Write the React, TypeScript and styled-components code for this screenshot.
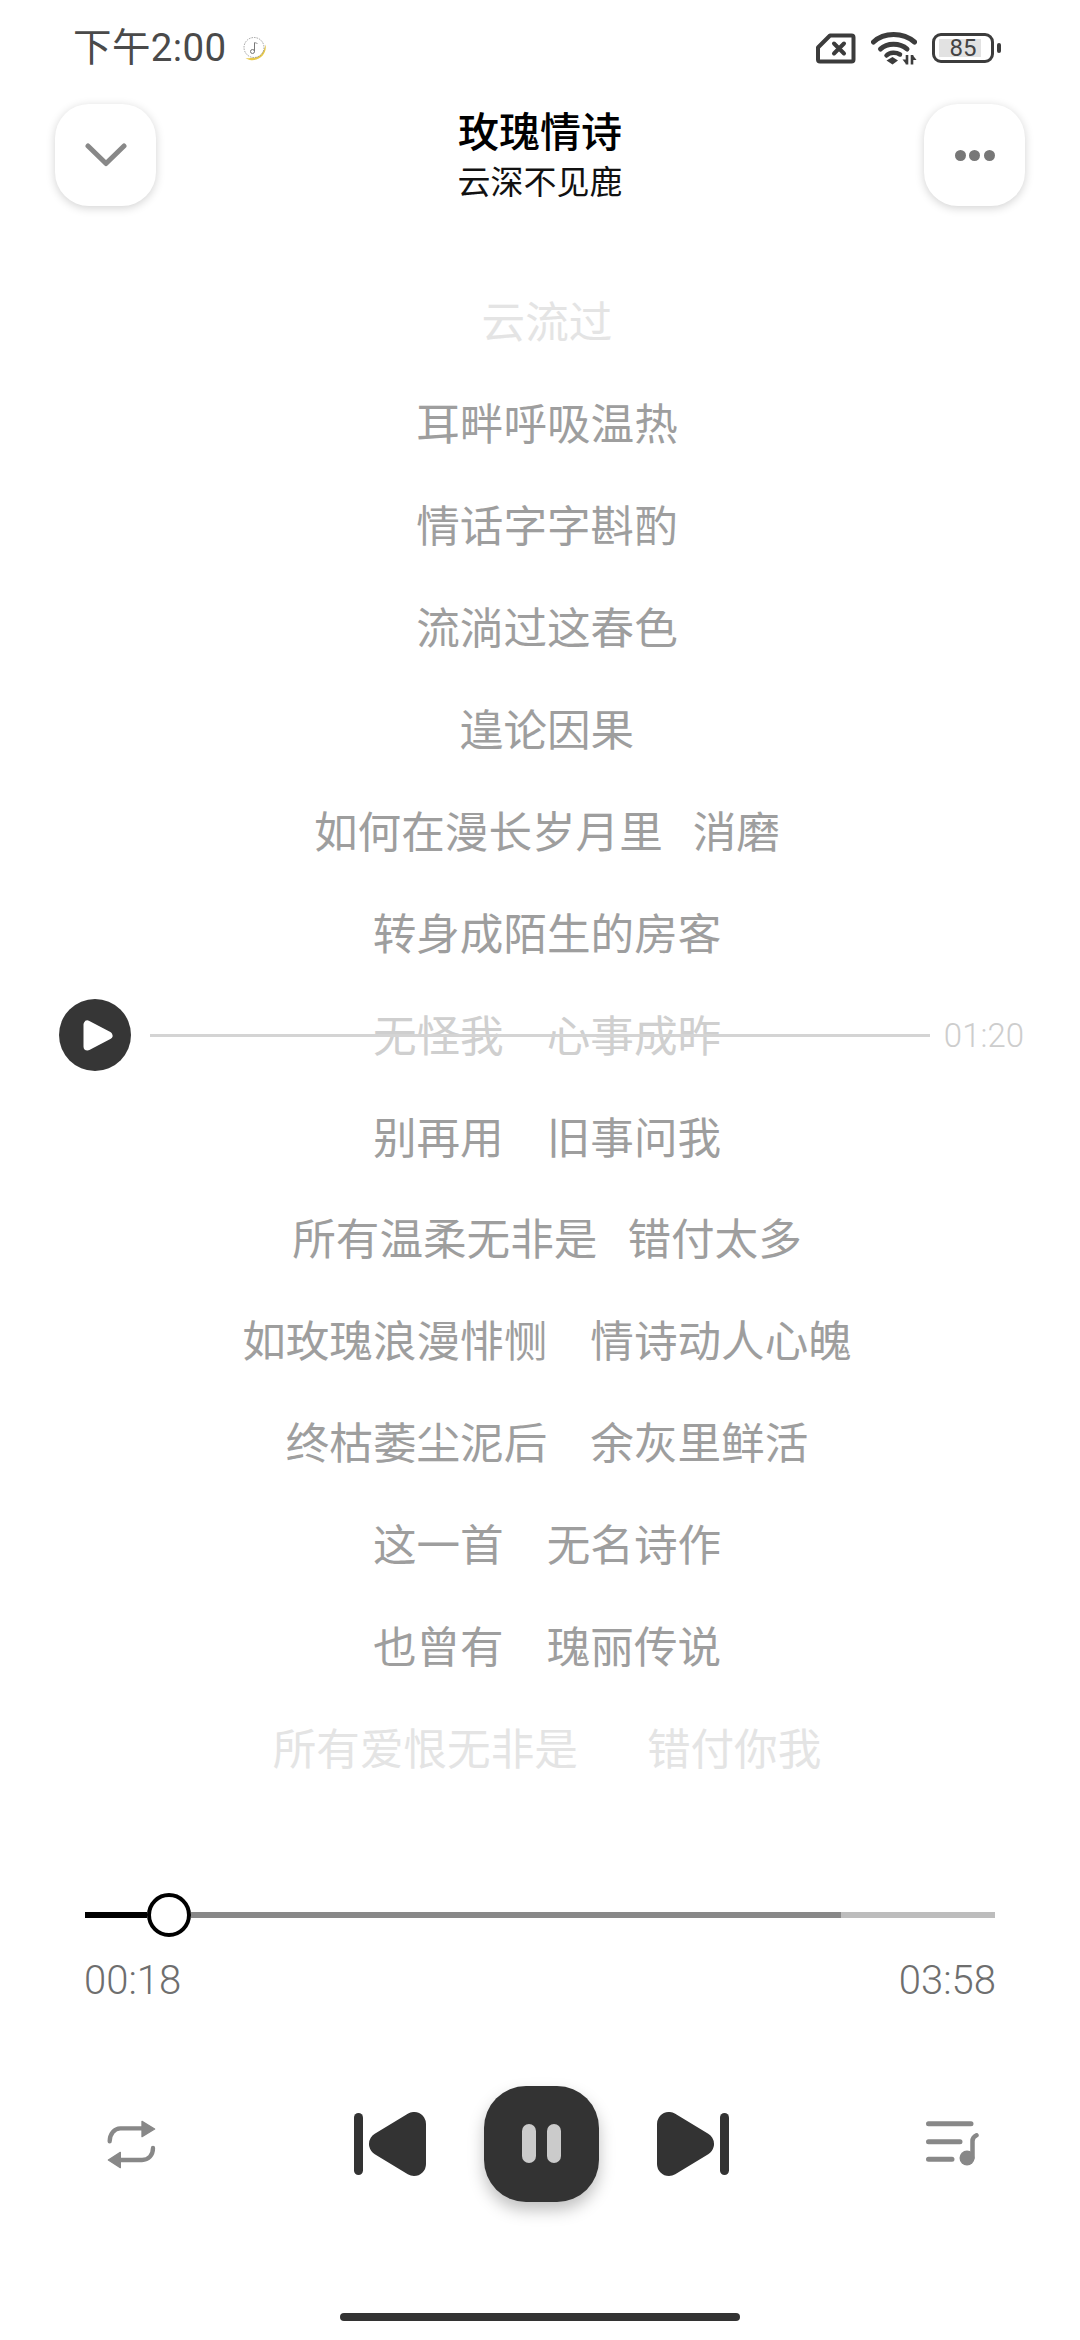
import * as React from 'react';
import styled, { createGlobalStyle } from 'styled-components';

const GlobalStyle = createGlobalStyle`
    html, body {
        margin: 0;
        padding: 0;
        background: #fff;
    }
    body {
        font-family: Roboto, "Noto Sans CJK SC", sans-serif;
    }
`;

const Page = styled.div`
    width: 1080px;
    height: 2340px;
    display: flex;
    flex-direction: column;
    background: #fff;
    overflow: hidden;
`;

const StatusBar = styled.div`
    height: 104px;
    padding: 0 86px 8px 73px;
    box-sizing: border-box;
    display: flex;
    align-items: center;
    justify-content: space-between;
`;

const StatusLeft = styled.div`
    display: flex;
    align-items: center;
    gap: 15px;
`;

const Clock = styled.span`
    font-family: Roboto, "Noto Sans CJK SC", sans-serif;
    font-size: 38.5px;
    line-height: 48px;
    letter-spacing: 0.4px;
    color: #4a4a4a;
`;

const StatusRight = styled.div`
    display: flex;
    align-items: center;
    gap: 15px;
`;

const Battery = styled.div`
    position: relative;
    width: 62px;
    height: 30px;
    box-sizing: border-box;
    border: 3px solid #3c3c3c;
    border-radius: 9px;
    display: flex;
    align-items: center;
    justify-content: center;
    font-size: 24px;
    color: #444;
    background: linear-gradient(to right, #e2e2e2 0, #e2e2e2 100%) no-repeat 4px center / 42px 18px;

    &::after {
        content: '';
        position: absolute;
        right: -10px;
        top: 7px;
        width: 4px;
        height: 10px;
        border-radius: 2px;
        background: #3c3c3c;
    }
`;

const Header = styled.div`
    height: 102px;
    padding: 0 55px;
    display: flex;
    align-items: center;
    justify-content: space-between;
`;

const SquareButton = styled.div`
    width: 101px;
    height: 102px;
    border-radius: 34px;
    background: #fff;
    box-shadow: 0 2px 10px rgba(0, 0, 0, 0.18);
    display: flex;
    align-items: center;
    justify-content: center;
`;

const Titles = styled.div`
    display: flex;
    flex-direction: column;
    align-items: center;
    padding-bottom: 4px;
`;

const SongTitle = styled.div`
    font-family: "Noto Sans CJK SC", sans-serif;
    font-size: 41px;
    line-height: 48px;
    font-weight: 500;
    color: #000;
`;

const Artist = styled.div`
    margin-top: 6px;
    font-family: "Noto Sans CJK SC", sans-serif;
    font-size: 33px;
    line-height: 42px;
    color: #111;
`;

const Dots = styled.div`
    display: flex;
    gap: 3.5px;
`;

const Dot = styled.span`
    width: 11px;
    height: 11px;
    border-radius: 50%;
    background: #777;
`;

const Lyrics = styled.div`
    position: relative;
    margin-top: 62.5px;
    display: grid;
    grid-auto-rows: 101.9px;
    padding-left: 14px;
`;

const toneColor = {
    normal: '#9e9e9e',
    active: '#cfcfcf',
    faded: '#e4e4e4',
};

const LyricRow = styled.div<{ $tone: keyof typeof toneColor; $gap: number }>`
    display: flex;
    align-items: center;
    justify-content: center;
    gap: ${(p) => p.$gap}px;
    font-family: "Noto Sans CJK SC", sans-serif;
    font-size: 43.6px;
    color: ${(p) => toneColor[p.$tone]};
`;

const ScrubRow = styled.div`
    position: absolute;
    left: 59px;
    right: 56px;
    top: 730.5px;
    height: 72px;
    display: flex;
    align-items: center;
`;

const ScrubPlay = styled.div`
    width: 72px;
    height: 72px;
    flex: none;
    border-radius: 50%;
    background: #363636;
    display: flex;
    align-items: center;
    justify-content: center;
`;

const ScrubLine = styled.div`
    flex: 1;
    height: 3px;
    margin: 0 14px 0 19px;
    background: #d4d4d4;
`;

const ScrubTime = styled.span`
    font-size: 33px;
    font-weight: 300;
    color: #cdcdcd;
`;

const Progress = styled.div`
    margin-top: 96px;
    padding: 0 85px;
`;

const Track = styled.div`
    height: 44px;
    display: flex;
    align-items: center;
`;

const TrackPart = styled.div<{ $color: string; $width?: number }>`
    height: 6px;
    background: ${(p) => p.$color};
    ${(p) => (p.$width ? `width: ${p.$width}px;` : 'flex: 1;')}
`;

const Thumb = styled.div`
    width: 44px;
    height: 44px;
    flex: none;
    box-sizing: border-box;
    border: 4px solid #000;
    border-radius: 50%;
    background: #fff;
`;

const Times = styled.div`
    margin: 21px -1px 0 -1px;
    display: flex;
    justify-content: space-between;
    font-size: 40px;
    line-height: 46px;
    font-weight: 300;
    color: #6e6e6e;
`;

const Controls = styled.div`
    margin-top: 82px;
    padding: 0 101px 0 107px;
    display: flex;
    align-items: center;
    justify-content: space-between;
`;

const Transport = styled.div`
    display: flex;
    align-items: center;
    gap: 58px;
`;

const PauseButton = styled.div`
    width: 115px;
    height: 116px;
    border-radius: 42px;
    background: #333;
    box-shadow: 0 8px 16px rgba(0, 0, 0, 0.25);
    display: flex;
    align-items: center;
    justify-content: center;
    gap: 11px;
`;

const PauseBar = styled.span`
    width: 14px;
    height: 39px;
    border-radius: 7px;
    background: #cbcbcb;
`;

const SkipIcon = styled.svg<{ $flip?: boolean }>`
    display: block;
    ${(p) => (p.$flip ? 'transform: scaleX(-1);' : '')}
`;

const HomeIndicator = styled.div`
    width: 400px;
    height: 8px;
    margin: auto auto 19px;
    border-radius: 4px;
    background: #333;
`;

const lyrics: { parts: string[]; tone?: keyof typeof toneColor; gap?: number }[] = [
    { parts: ['云流过'], tone: 'faded' },
    { parts: ['耳畔呼吸温热'] },
    { parts: ['情话字字斟酌'] },
    { parts: ['流淌过这春色'] },
    { parts: ['遑论因果'] },
    { parts: ['如何在漫长岁月里', '消磨'], gap: 30 },
    { parts: ['转身成陌生的房客'] },
    { parts: ['无怪我', '心事成昨'], tone: 'active', gap: 43 },
    { parts: ['别再用', '旧事问我'], gap: 43 },
    { parts: ['所有温柔无非是', '错付太多'], gap: 30 },
    { parts: ['如玫瑰浪漫悱恻', '情诗动人心魄'], gap: 43 },
    { parts: ['终枯萎尘泥后', '余灰里鲜活'], gap: 43 },
    { parts: ['这一首', '无名诗作'], gap: 43 },
    { parts: ['也曾有', '瑰丽传说'], gap: 43 },
    { parts: ['所有爱恨无非是', '错付你我'], tone: 'faded', gap: 69 },
];

const MusicMoon = () => (
    <svg width="25" height="25" viewBox="0 0 25 25">
        <path d="M23.5 8.5C25.5 17 18 25.5 8 24C5.5 23.5 4.5 22.8 3.5 22C12 23.5 22 19 23.5 8.5Z" fill="#e8c94a" />
        <circle cx="12" cy="11.5" r="10" fill="#fff" stroke="#8c8c8c" strokeWidth="0.8" strokeDasharray="1.6 1" />
        <path d="M12.5 15.5V6.5" fill="none" stroke="#777" strokeWidth="1" />
        <path d="M12.5 6.5L15.5 7.5" fill="none" stroke="#999" strokeWidth="1" />
        <circle cx="10.5" cy="15.5" r="2" fill="none" stroke="#777" strokeWidth="1" />
    </svg>
);

const SimOff = () => (
    <svg width="40" height="31" viewBox="0 0 40 31">
        <path
            d="M14 2.5H35.5a2 2 0 0 1 2 2V26.5a2 2 0 0 1-2 2H4a2 2 0 0 1-2-2V14.5Z"
            fill="none"
            stroke="#3c3c3c"
            strokeWidth="4"
            strokeLinejoin="round"
        />
        <path d="M18 10.5L28 20.5M28 10.5L18 20.5" stroke="#3c3c3c" strokeWidth="4" strokeLinecap="round" />
    </svg>
);

const Wifi = () => (
    <svg width="46" height="34" viewBox="0 0 46 34">
        <path d="M2.5 11C13 1 32 1 43.5 11" fill="none" stroke="#3c3c3c" strokeWidth="5" strokeLinecap="round" />
        <path d="M9.5 18C16 11.5 29 11.5 36 18" fill="none" stroke="#3c3c3c" strokeWidth="5" strokeLinecap="round" />
        <path d="M15.5 24.5C19 21 25 21 29 23.5" fill="none" stroke="#3c3c3c" strokeWidth="4.5" strokeLinecap="round" />
        <path d="M15.5 29.5L21.5 26L27 29.5L21.5 33.5Z" fill="#3c3c3c" />
        <path d="M36 24V33.5" stroke="#3c3c3c" strokeWidth="2.6" />
        <path d="M31.5 28.5H35V33Z" fill="#3c3c3c" />
        <path d="M41 33.5V24" stroke="#3c3c3c" strokeWidth="2.6" />
        <path d="M42 24.5L45.5 29H42Z" fill="#3c3c3c" />
    </svg>
);

const Chevron = () => (
    <svg width="42" height="24" viewBox="0 0 42 24">
        <path d="M3 3L21 20.5L39 3" fill="none" stroke="#888" strokeWidth="5" strokeLinecap="round" strokeLinejoin="round" />
    </svg>
);

const PlayGlyph = () => (
    <svg width="72" height="72" viewBox="0 0 72 72">
        <path d="M28.5 25.5V47.5L49.5 36.5Z" fill="#fff" stroke="#fff" strokeWidth="8" strokeLinejoin="round" />
    </svg>
);

const RepeatIcon = () => (
    <svg width="50" height="50" viewBox="0 0 150 150">
        <path d="M8 67C8 45 22 28 40 28H108" fill="none" stroke="#888" strokeWidth="13" strokeLinecap="round" />
        <path d="M105 7L143 30L105 53Z" fill="#888" stroke="#888" strokeWidth="4" strokeLinejoin="round" />
        <path d="M138 87C138 108 125 123 105 123H40" fill="none" stroke="#888" strokeWidth="13" strokeLinecap="round" />
        <path d="M40 100L4 123L40 146Z" fill="#888" stroke="#888" strokeWidth="4" strokeLinejoin="round" />
    </svg>
);

const SkipGlyph = ({ flip }: { flip?: boolean }) => (
    <SkipIcon $flip={flip} width="72" height="64" viewBox="0 0 72 64">
        <rect x="0" y="1" width="9" height="62" rx="4.5" fill="#333" />
        <path d="M60 12V52L27 32Z" fill="#333" stroke="#333" strokeWidth="24" strokeLinejoin="round" />
    </SkipIcon>
);

const QueueIcon = () => (
    <svg width="53" height="46" viewBox="0 0 53 46">
        <path d="M2.5 2.7H45M2.5 20.7H34M2.5 38.3H26" stroke="#888" strokeWidth="5" strokeLinecap="round" />
        <circle cx="41" cy="37" r="7.5" fill="#888" />
        <path d="M46.5 37V20C46.5 17 48 15.5 50.5 14.3" fill="none" stroke="#888" strokeWidth="4.5" strokeLinecap="round" />
    </svg>
);

export default function App() {
    return (
        <Page>
            <GlobalStyle />
            <StatusBar>
                <StatusLeft>
                    <Clock>下午2:00</Clock>
                    <MusicMoon />
                </StatusLeft>
                <StatusRight>
                    <SimOff />
                    <Wifi />
                    <Battery>85</Battery>
                </StatusRight>
            </StatusBar>
            <Header>
                <SquareButton>
                    <Chevron />
                </SquareButton>
                <Titles>
                    <SongTitle>玫瑰情诗</SongTitle>
                    <Artist>云深不见鹿</Artist>
                </Titles>
                <SquareButton>
                    <Dots>
                        <Dot />
                        <Dot />
                        <Dot />
                    </Dots>
                </SquareButton>
            </Header>
            <Lyrics>
                {lyrics.map((line, i) => (
                    <LyricRow key={i} $tone={line.tone || 'normal'} $gap={line.gap || 0}>
                        {line.parts.map((part) => (
                            <span key={part}>{part}</span>
                        ))}
                    </LyricRow>
                ))}
                <ScrubRow>
                    <ScrubPlay>
                        <PlayGlyph />
                    </ScrubPlay>
                    <ScrubLine />
                    <ScrubTime>01:20</ScrubTime>
                </ScrubRow>
            </Lyrics>
            <Progress>
                <Track>
                    <TrackPart $color="#000" $width={62} />
                    <Thumb />
                    <TrackPart $color="#888" $width={650} />
                    <TrackPart $color="#bdbdbd" />
                </Track>
                <Times>
                    <span>00:18</span>
                    <span>03:58</span>
                </Times>
            </Progress>
            <Controls>
                <RepeatIcon />
                <Transport>
                    <SkipGlyph />
                    <PauseButton>
                        <PauseBar />
                        <PauseBar />
                    </PauseButton>
                    <SkipGlyph flip />
                </Transport>
                <QueueIcon />
            </Controls>
            <HomeIndicator />
        </Page>
    );
}
